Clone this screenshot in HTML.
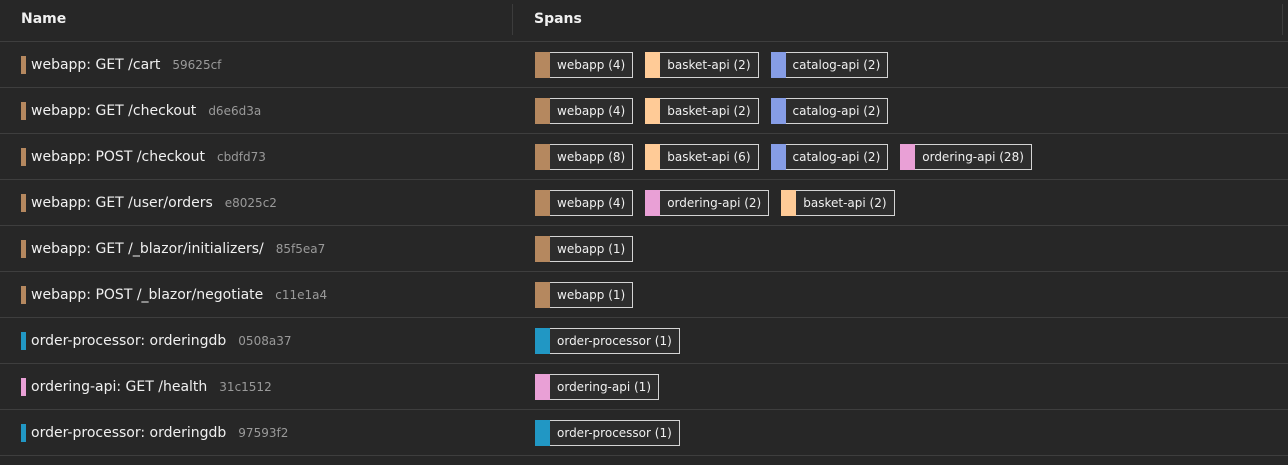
<!DOCTYPE html>
<html><head><meta charset="utf-8"><style>
*{margin:0;padding:0;box-sizing:border-box}
body{width:1288px;height:465px;background:#272727;font-family:"DejaVu Sans","Liberation Sans",sans-serif;color:#f0f0f0;overflow:hidden;position:relative}
.hdr{height:42px;border-bottom:1px solid #3e3e3e;position:relative;font-weight:bold;font-size:14px}
.hdr .n{position:absolute;left:21px;top:11px}
.hdr .s{position:absolute;left:534px;top:11px}
.div{position:absolute;top:4px;width:1px;height:31px;background:#3c3c3c}
.row{height:46px;border-bottom:1px solid #3e3e3e;position:relative}
.name{position:absolute;left:21px;top:14px;height:18px;display:flex;align-items:center;font-size:14px;white-space:nowrap}
.bar{width:5px;height:18px;margin-right:5px}
.id{color:#9a9a9a;font-size:12px;margin-left:12px}
.spans{position:absolute;left:535px;top:10px;display:flex}
.b{display:inline-flex;align-items:center;height:26px;border:1px solid #d4d4d4;border-left:none;background:#2d2d2d;margin-right:12px;font-size:12px;padding-right:7px;white-space:nowrap}
.b i{display:block;width:15px;height:26px;margin:-1px 7px -1px 0}
.w{background:#b5885f}.k{background:#ffcb97}.c{background:#869de6}.o{background:#e9a0d6}.p{background:#2197c4}
</style></head><body>
<div class="hdr"><span class="n">Name</span><span class="s">Spans</span><div class="div" style="left:512px"></div><div class="div" style="left:1282px"></div></div>

<div class="row"><div class="name"><span class="bar w"></span>webapp: GET /cart<span class="id">59625cf</span></div>
<div class="spans"><span class="b"><i class="w"></i>webapp (4)</span><span class="b"><i class="k"></i>basket-api (2)</span><span class="b"><i class="c"></i>catalog-api (2)</span></div></div>

<div class="row"><div class="name"><span class="bar w"></span>webapp: GET /checkout<span class="id">d6e6d3a</span></div>
<div class="spans"><span class="b"><i class="w"></i>webapp (4)</span><span class="b"><i class="k"></i>basket-api (2)</span><span class="b"><i class="c"></i>catalog-api (2)</span></div></div>

<div class="row"><div class="name"><span class="bar w"></span>webapp: POST /checkout<span class="id">cbdfd73</span></div>
<div class="spans"><span class="b"><i class="w"></i>webapp (8)</span><span class="b"><i class="k"></i>basket-api (6)</span><span class="b"><i class="c"></i>catalog-api (2)</span><span class="b"><i class="o"></i>ordering-api (28)</span></div></div>

<div class="row"><div class="name"><span class="bar w"></span>webapp: GET /user/orders<span class="id">e8025c2</span></div>
<div class="spans"><span class="b"><i class="w"></i>webapp (4)</span><span class="b"><i class="o"></i>ordering-api (2)</span><span class="b"><i class="k"></i>basket-api (2)</span></div></div>

<div class="row"><div class="name"><span class="bar w"></span>webapp: GET /_blazor/initializers/<span class="id">85f5ea7</span></div>
<div class="spans"><span class="b"><i class="w"></i>webapp (1)</span></div></div>

<div class="row"><div class="name"><span class="bar w"></span>webapp: POST /_blazor/negotiate<span class="id">c11e1a4</span></div>
<div class="spans"><span class="b"><i class="w"></i>webapp (1)</span></div></div>

<div class="row"><div class="name"><span class="bar p"></span>order-processor: orderingdb<span class="id">0508a37</span></div>
<div class="spans"><span class="b"><i class="p"></i>order-processor (1)</span></div></div>

<div class="row"><div class="name"><span class="bar o"></span>ordering-api: GET /health<span class="id">31c1512</span></div>
<div class="spans"><span class="b"><i class="o"></i>ordering-api (1)</span></div></div>

<div class="row"><div class="name"><span class="bar p"></span>order-processor: orderingdb<span class="id">97593f2</span></div>
<div class="spans"><span class="b"><i class="p"></i>order-processor (1)</span></div></div>
</body></html>
